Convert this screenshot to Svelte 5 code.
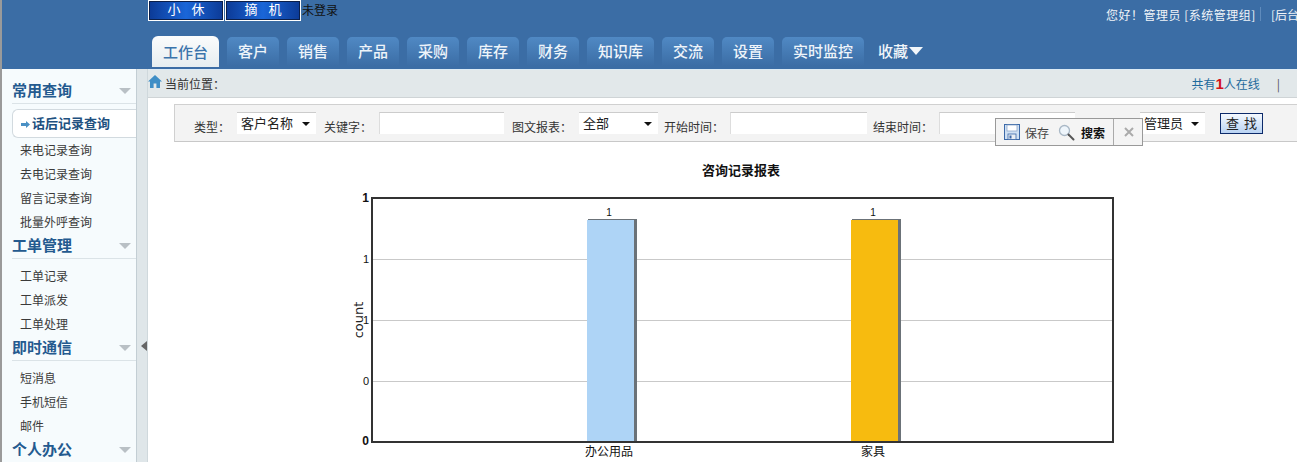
<script>
  const tabs = [
    { label: '客户', w: 52 }, { label: '销售', w: 52 }, { label: '产品', w: 52 }, { label: '采购', w: 52 },
    { label: '库存', w: 52 }, { label: '财务', w: 52 }, { label: '知识库', w: 67 }, { label: '交流', w: 52 },
    { label: '设置', w: 52 }, { label: '实时监控', w: 82 }
  ];
  const groups = [
    { title: '工单管理', items: ['工单记录', '工单派发', '工单处理'] },
    { title: '即时通信', items: ['短消息', '手机短信', '邮件'] },
    { title: '个人办公', items: [] }
  ];
  const grid = [259, 320, 381];
  const ticks = [
    { y: 198, t: '1', b: true }, { y: 259, t: '1' }, { y: 320, t: '1' }, { y: 381, t: '0' }, { y: 441, t: '0', b: true }
  ];
  const bars = [
    { x: 587, fill: '#aed4f6', label: '办公用品', cx: 610 },
    { x: 851, fill: '#f7bb0f', label: '家具', cx: 874 }
  ];
</script>

<div class="page">
  <header class="header">
    <div class="top">
      <div class="phone">
        <button class="phone-btn">小 休</button>
        <button class="phone-btn">摘 机</button>
        <span class="status">未登录</span>
      </div>
      <div class="user">
        <span class="hello">您好！管理员 [系统管理组]</span>
        <i class="sep"></i>
        <span>[后台</span>
      </div>
    </div>
    <nav class="nav">
      <a class="tab active">工作台</a>
      {#each tabs as t}
        <a class="tab" style="width:{t.w}px">{t.label}</a>
      {/each}
      <a class="fav">收藏<i class="fav-arrow"></i></a>
    </nav>
  </header>

  <div class="body">
    <aside class="side">
      <div class="head"><span>常用查询</span><i class="tri"></i></div>
      <ul class="list">
        <li class="current">
          <svg class="cur-arrow" width="9" height="7" viewBox="0 0 9 7"><path d="M0 2h5V0l4 3.500-4 3.500V5H0z" fill="#4a90c4"/></svg>话后记录查询
        </li>
        <li>来电记录查询</li>
        <li>去电记录查询</li>
        <li>留言记录查询</li>
        <li>批量外呼查询</li>
      </ul>
      {#each groups as g}
        <div class="head"><span>{g.title}</span><i class="tri"></i></div>
        <ul class="list">
          {#each g.items as it}<li>{it}</li>{/each}
        </ul>
      {/each}
    </aside>
    <div class="split"><i class="split-arrow"></i></div>

    <main class="main">
      <div class="crumb">
        <div class="crumb-left">
          <svg width="14" height="13" viewBox="0 0 14 13"><path d="M7 0 0 6.500h2V13h3.600V8.500h2.800V13H12V6.500h2z" fill="#3f8ec6"/></svg>
          <span>当前位置：</span>
        </div>
        <div class="online">
          <span>共有<b>1</b>人在线</span>
          <span class="bar">|</span>
        </div>
      </div>

      <div class="filter">
        <label class="l1">类型：</label>
        <div class="sel s1"><span>客户名称</span><i></i></div>
        <label class="l2">关键字：</label>
        <input class="i1" />
        <label class="l4">图文报表：</label>
        <div class="sel s2"><span>全部</span><i></i></div>
        <label class="l3">开始时间：</label>
        <input class="i2" />
        <label class="l3">结束时间：</label>
        <input class="i3" />
        <div class="sel s3"><span>管理员</span><i></i></div>
        <button class="find">查 找</button>

        <div class="pop">
          <svg width="16" height="16" viewBox="0 0 16 16">
            <rect x=".5" y=".5" width="15" height="15" fill="#cfe0f3" stroke="#3c69a8"/>
            <rect x="3" y="1" width="10" height="6" fill="#fff" stroke="#7f9cc4" stroke-width=".7"/>
            <rect x="4" y="10" width="8" height="5.500" fill="#e8edf3" stroke="#3c69a8" stroke-width=".8"/>
            <rect x="5.500" y="11.500" width="2" height="3" fill="#3c69a8"/>
          </svg>
          <span class="pop-t1">保存</span>
          <svg class="glass" width="17" height="17" viewBox="0 0 17 17">
            <circle cx="6.500" cy="6.500" r="5" fill="#eef5fb" stroke="#a9b8c6" stroke-width="1.300"/>
            <path d="M10.500 10.500 15.500 15.500" stroke="#555" stroke-width="2" stroke-linecap="round"/>
          </svg>
          <span class="pop-t2">搜索</span>
          <i class="pop-sep"></i>
          <svg class="close" width="10" height="10" viewBox="0 0 10 10"><path d="M1 1l8 8M9 1l-8 8" stroke="#aaa" stroke-width="2"/></svg>
        </div>
      </div>

      <svg class="chart" width="1149" height="320" viewBox="148 142 1149 320">
        <text x="741" y="175" text-anchor="middle" class="title">咨询记录报表</text>
        {#each grid as y}
          <line x1="373" x2="1112" y1={y + .5} y2={y + .5} stroke="#c9c9c9" />
        {/each}
        {#each bars as b}
          <rect x={b.x + 1} y="219" width="49" height="222" fill="#6b7278" />
          <rect x={b.x} y="220" width="47" height="221" fill={b.fill} />
          <text x={b.cx - 1} y="216" text-anchor="middle" class="small">1</text>
          <text x={b.cx - 1} y="456" text-anchor="middle" class="cat">{b.label}</text>
        {/each}
        <rect x="372" y="198" width="741" height="244" fill="none" stroke="#333" stroke-width="2" />
        {#each ticks as t}
          <text x="369" y={t.y + 4} text-anchor="end" class="tick" class:strong={t.b}>{t.t}</text>
        {/each}
        <text transform="translate(363 320) rotate(-90)" text-anchor="middle" class="axis">count</text>
      </svg>
    </main>
  </div>
</div>

<style>
  :global(html), :global(body) { margin: 0; height: 462px; overflow: hidden; background: #fff; }
  .page {
    width: 1297px; height: 462px; overflow: hidden; box-sizing: border-box;
    border-left: 2px solid #9a9a9a;
    font-family: "Noto Sans CJK SC", "Liberation Sans", sans-serif;
    font-size: 12px; color: #333;
  }
  .header { height: 69px; background: #3b6da5; display: flex; flex-direction: column; }
  .top { height: 36px; display: flex; justify-content: space-between; }
  .phone { margin-left: 146px; display: flex; align-items: flex-start; }
  .phone-btn {
    width: 76px; height: 21px; padding: 0 0 3px; margin: 0 1px 0 0; box-sizing: border-box;
    border: 1px solid #fff; outline: 1px solid #0b1f4a; outline-offset: -2px;
    background: linear-gradient(90deg, #0c3a96, #1a66d8 50%, #0c3a96);
    color: #fff; font: 13px/16px "Noto Sans CJK SC", sans-serif; word-spacing: 8px;
  }
  .status { color: #111; font-size: 12px; line-height: 20px; }
  .user { display: flex; align-items: center; height: 28px; color: #f0f4f8; font-size: 12px; white-space: nowrap; width: 191px; flex: none; overflow: hidden; }
  .hello { width: 148px; letter-spacing: .5px; flex: none; }
  .sep { width: 1px; height: 14px; background: #5f8bbc; margin: 0 10px 0 6px; flex: none; }
  .nav { display: flex; align-items: flex-start; margin-left: 150px; gap: 8px; }
  .tab {
    height: 27px; margin-top: 1px; display: flex; justify-content: center; align-items: center; padding-bottom: 2px;
    background: linear-gradient(#5089c4, #3b6da5); border-radius: 5px 5px 0 0;
    color: #eef4fa; font-size: 15px; font-weight: 500;
  }
  .tab.active {
    width: 67px; height: 31px; margin-top: 0; padding-bottom: 0;
    background: linear-gradient(#fbfcfc, #e6edf0); color: #3b74ab; border-radius: 6px 6px 0 0;
  }
  .fav { margin: 4px 0 0 6px; color: #f2f6fa; font-size: 15px; font-weight: 500; display: flex; align-items: center; line-height: 22px; }
  .fav-arrow { width: 0; height: 0; margin-left: 1px; border: 7px solid transparent; border-top: 8px solid #f2f6fa; border-bottom: 0; }

  .body { display: flex; height: 393px; }
  .side { width: 134px; background: #f6fbfd; padding-top: 10px; flex: none; border-right: 1px solid #c3ced4; }
  .head {
    height: 24px; margin-left: 10px; border-bottom: 1px solid #dbe3e7;
    display: flex; justify-content: space-between; align-items: flex-start;
    color: #245a8f; font-size: 15px; font-weight: 700; line-height: 21px;
  }
  .tri { width: 0; height: 0; margin: 9px 5px 0 0; border: 6px solid transparent; border-top: 6px solid #b9c0c5; border-bottom: 0; }
  .list { list-style: none; margin: 0; padding: 5px 0 0 0; }
  .list:last-child { padding: 0; }
  .list li { height: 24px; line-height: 23px; padding-left: 18px; color: #3a3a3a; font-size: 12px; }
  .list li.current {
    height: 27px; line-height: 26px; margin-left: 10px; padding-left: 8px;
    border: 1px solid #d2dadf; border-right: 0; border-radius: 6px 0 0 6px; background: #fff;
    color: #21507f; font-weight: 700; font-size: 13px; white-space: nowrap;
  }
  .cur-arrow { margin-right: 2px; }
  .split { width: 11px; flex: none; background: #dfe6e9; border-right: 1px solid #cfd8dc; display: flex; align-items: flex-start; padding: 272px 0 0 4px; box-sizing: border-box; }
  .split-arrow { width: 0; height: 0; border: 5px solid transparent; border-right: 6px solid #666; border-left: 0; }

  .main { flex: 1; min-width: 0; background: #fff; }
  .crumb {
    height: 29px; background: #e2e8ea; border-top: 1px solid #dcebf5; box-sizing: border-box;
    border-bottom: 1px solid #cfd4d6; display: flex; justify-content: space-between; align-items: center;
  }
  .crumb-left { display: flex; align-items: center; gap: 3px; color: #333; }
  .crumb-left svg { margin-top: -4px; }
  .online { display: flex; color: #1f6a9c; margin-right: 17px; gap: 17px; align-items: center; }
  .online b { color: #d3141c; font: 700 15px "Liberation Sans", sans-serif; }
  .bar { color: #555; }

  .filter {
    position: relative; box-sizing: border-box; height: 38px; margin: 6px 0 0 26px;
    background: #f3f3f3; border: 1px solid #d0d0d0; border-right: 0; border-bottom-color: #c8c8c8;
    display: flex; align-items: flex-start; padding-top: 7px;
  }
  .filter label { line-height: 23px; margin-top: 3px; color: #333; white-space: nowrap; flex: none; }
  .l1 { margin-left: 19px; width: 43px; }
  .l2 { margin-left: 8px; width: 55px; }
  .l4 { margin-left: 8px; width: 67px; }
  .l3 { margin-left: 6px; width: 66px; }
  .sel { height: 22px; box-sizing: border-box; background: #fff; border-top: 1px solid #ccc; display: flex; justify-content: space-between; align-items: center; padding: 0 6px 3px 4px; font-size: 13px; color: #222; flex: none; }
  .sel i { width: 0; height: 0; margin-top: 3px; border: 4px solid transparent; border-top: 4px solid #111; border-bottom: 0; }
  .s1, .s2 { width: 79px; }
  .s3 { width: 65px; margin-left: 65px; }
  input { height: 22px; box-sizing: border-box; background: #fff; border: 0; border-top: 1px solid #ccc; border-left: 1px solid #ddd; padding: 0; margin: 0; flex: none; }
  .i1 { width: 125px; }
  .i2 { width: 137px; }
  .i3 { width: 136px; }
  .find {
    width: 43px; height: 21px; margin: 1px 0 0 15px; padding: 0 0 2px; box-sizing: border-box; flex: none;
    border: 1px solid #0c2a6a; background: linear-gradient(#f5f9fe, #b9d3f3);
    font: 13px/16px "Noto Sans CJK SC", sans-serif; color: #222; word-spacing: 2px;
  }
  .pop {
    position: absolute; left: 820px; top: 13px; width: 148px; height: 28px; box-sizing: border-box;
    background: #f4f4f4; border: 1px solid #999; display: flex; align-items: center; padding-left: 8px; font-size: 12px;
  }
  .pop-t1 { margin-left: 5px; color: #444; }
  .glass { margin-left: 9px; }
  .pop-t2 { margin-left: 6px; color: #111; font-weight: 700; }
  .pop-sep { width: 1px; height: 26px; background: #aaa; margin-left: 8px; }
  .close { margin-left: 10px; }

  .chart { display: block; }
  text { font-family: "Noto Sans CJK SC", "Liberation Sans", sans-serif; fill: #111; }
  .title { font-size: 13px; font-weight: 700; }
  .small { font-size: 10px; font-family: "Liberation Sans", sans-serif; }
  .cat { font-size: 12px; }
  .tick { font-size: 11px; font-family: "Liberation Sans", sans-serif; }
  .tick.strong { font-weight: 700; font-size: 12px; }
  .axis { font-size: 13px; font-family: "DejaVu Sans", sans-serif; fill: #222; }
</style>
